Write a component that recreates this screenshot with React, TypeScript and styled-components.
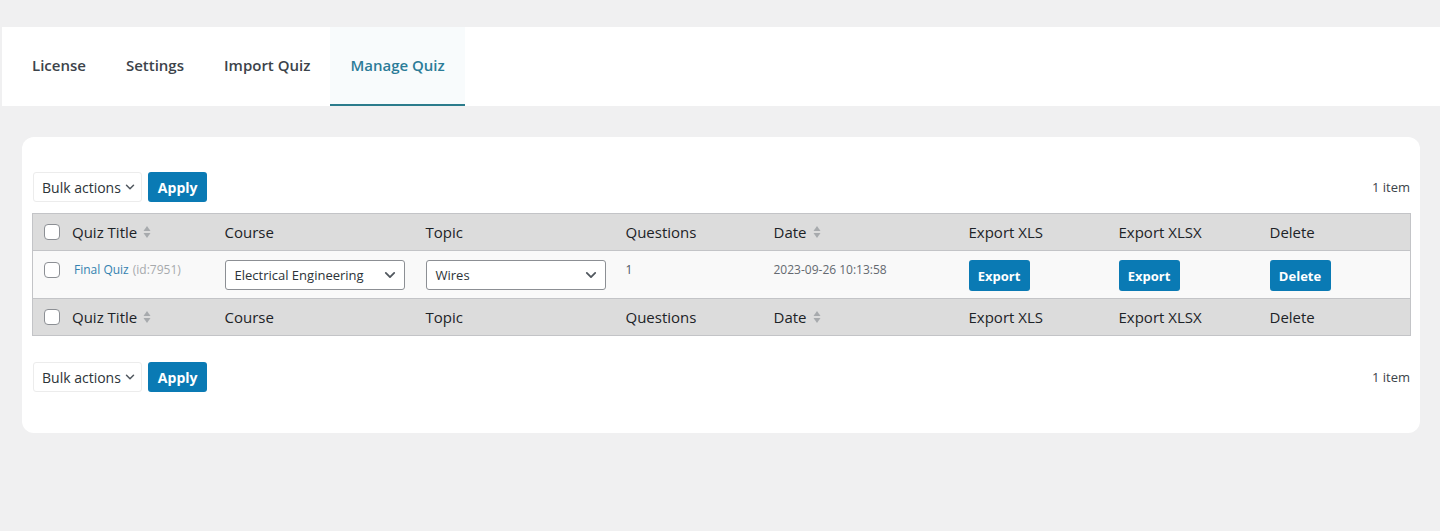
import styled, { createGlobalStyle } from 'styled-components'

const GlobalStyle = createGlobalStyle`
  html, body {
    margin: 0;
    padding: 0;
    background: #f0f0f1;
    font-family: 'Open Sans', 'Noto Sans', sans-serif;
    color: #1d2327;
  }
`

const Page = styled.div`
  width: 1440px;
  height: 531px;
  padding-top: 27px;
  box-sizing: border-box;
`

const TabBar = styled.nav`
  display: flex;
  margin-left: 2px;
  height: 79px;
  background: #fff;
  padding-left: 10px;
`

const Tab = styled.div<{ active?: boolean }>`
  display: flex;
  align-items: center;
  padding: 0 20px 2px;
  font-size: 15px;
  font-weight: 600;
  color: ${({ active }) => (active ? '#2b7c98' : '#3c434a')};
  background: ${({ active }) => (active ? '#f8fbfc' : 'transparent')};
  border-bottom: 2px solid ${({ active }) => (active ? '#2b7c8c' : 'transparent')};
`

const Card = styled.section`
  margin: 31px 20px 0 22px;
  background: #fff;
  border-radius: 12px;
  padding: 35px 10px 41px 10px;
`

const Toolbar = styled.div<{ bottom?: boolean }>`
  display: flex;
  align-items: center;
  gap: 6px;
  margin-bottom: ${({ bottom }) => (bottom ? '0' : '11px')};
  margin-top: ${({ bottom }) => (bottom ? '26px' : '0')};
`

const BulkSelect = styled.div`
  display: flex;
  align-items: center;
  gap: 4px;
  height: 30px;
  box-sizing: border-box;
  padding: 0 6px 0 8px;
  border: 1px solid #ececec;
  border-radius: 3px;
  font-size: 14px;
  color: #2c3338;
  margin-left: 1px;
`

const Button = styled.button`
  height: 30px;
  padding: 0 10px;
  border: none;
  border-radius: 3px;
  background: #0a7ab4;
  color: #fff;
  font-family: inherit;
  font-size: 14px;
  font-weight: 700;
`

const SmallButton = styled(Button)`
  height: 31px;
  width: 61px;
  padding: 0;
  font-size: 13px;
`

const Count = styled.span`
  margin-left: auto;
  font-size: 13px;
  color: #3c434a;
`

const Table = styled.table`
  width: 100%;
  border-collapse: collapse;
  border: 1px solid #c3c4c7;
  table-layout: fixed;
`

const HeadRow = styled.tr`
  background: #dcdcdc;
  height: 37px;
`

const Th = styled.th<{ w: number }>`
  width: ${({ w }) => w}px;
  box-sizing: border-box;
  text-align: left;
  font-weight: 400;
  font-size: 15px;
  padding: 0 10px;
  color: #1d2327;
  white-space: nowrap;
`

const BodyRow = styled.tr`
  background: #f9f9f9;
  height: 48px;
  border-top: 1px solid #c3c4c7;
  border-bottom: 1px solid #c3c4c7;
`

const Td = styled.td`
  padding: 9px 10px 0;
  vertical-align: top;
  font-size: 12px;
  line-height: 20px;
  color: #50575e;
  white-space: nowrap;
`

const TitleCell = styled.div<{ gap?: number }>`
  display: flex;
  align-items: center;
  gap: ${({ gap }) => gap ?? 12}px;
  padding-left: 1px;
`

const Check = styled.span`
  display: inline-block;
  width: 16px;
  height: 16px;
  box-sizing: border-box;
  border: 1px solid #8c8f94;
  border-radius: 4px;
  background: #fff;
  flex-shrink: 0;
`

const Sortable = styled.span`
  display: inline-flex;
  align-items: center;
  gap: 6px;
`

const QuizLink = styled.a`
  color: #3582b0;
  text-decoration: none;
  font-size: 12px;
`

const IdLabel = styled.span`
  color: #a7aaad;
  margin-left: 4px;
`

const Select = styled.div`
  display: flex;
  align-items: center;
  justify-content: space-between;
  width: 180px;
  height: 30px;
  box-sizing: border-box;
  padding: 0 8px 0 9px;
  border: 1px solid #8c8f94;
  border-radius: 3px;
  background: #fff;
  font-size: 13px;
  color: #2c3338;
`

const DateText = styled.span`
  color: #646970;
`

const Chevron = ({ size = 10 }: { size?: number }) => (
  <svg width={size} height={size} viewBox="0 0 10 10" fill="none">
    <path d="M1.5 3.2 L5 6.7 L8.5 3.2" stroke="#50575e" strokeWidth="1.5" strokeLinecap="round" strokeLinejoin="round" />
  </svg>
)

const SortIcon = () => (
  <svg width="8" height="14" viewBox="0 0 8 14">
    <path d="M4 1 L7.5 6 H0.5 Z" fill="#a7aaad" />
    <path d="M4 13 L7.5 8 H0.5 Z" fill="#a7aaad" />
  </svg>
)

const columns = [
  { key: 'title', label: 'Quiz Title', w: 182, sort: true },
  { key: 'course', label: 'Course', w: 201 },
  { key: 'topic', label: 'Topic', w: 200 },
  { key: 'questions', label: 'Questions', w: 148 },
  { key: 'date', label: 'Date', w: 195, sort: true },
  { key: 'xls', label: 'Export XLS', w: 150 },
  { key: 'xlsx', label: 'Export XLSX', w: 151 },
  { key: 'delete', label: 'Delete', w: 151 },
]

const HeaderRow = () => (
  <HeadRow>
    {columns.map((c, i) => (
      <Th key={c.key} w={c.w}>
        {i === 0 ? (
          <TitleCell>
            <Check />
            <Sortable>
              {c.label} <SortIcon />
            </Sortable>
          </TitleCell>
        ) : c.sort ? (
          <Sortable>
            {c.label} <SortIcon />
          </Sortable>
        ) : (
          c.label
        )}
      </Th>
    ))}
  </HeadRow>
)

const BulkBar = ({ bottom }: { bottom?: boolean }) => (
  <Toolbar bottom={bottom}>
    <BulkSelect>
      Bulk actions <Chevron />
    </BulkSelect>
    <Button>Apply</Button>
    <Count>1 item</Count>
  </Toolbar>
)

export default function App() {
  return (
    <Page>
      <GlobalStyle />
      <TabBar>
        <Tab>License</Tab>
        <Tab>Settings</Tab>
        <Tab>Import Quiz</Tab>
        <Tab active>Manage Quiz</Tab>
      </TabBar>
      <Card>
        <BulkBar />
        <Table>
          <thead>
            <HeaderRow />
          </thead>
          <tbody>
            <BodyRow>
              <Td>
                <TitleCell gap={14}>
                  <Check />
                  <span>
                    <QuizLink href="#">Final Quiz</QuizLink>
                    <IdLabel>(id:7951)</IdLabel>
                  </span>
                </TitleCell>
              </Td>
              <Td>
                <Select>
                  Electrical Engineering <Chevron size={12} />
                </Select>
              </Td>
              <Td>
                <Select>
                  Wires <Chevron size={12} />
                </Select>
              </Td>
              <Td>1</Td>
              <Td>
                <DateText>2023-09-26 10:13:58</DateText>
              </Td>
              <Td>
                <SmallButton>Export</SmallButton>
              </Td>
              <Td>
                <SmallButton>Export</SmallButton>
              </Td>
              <Td>
                <SmallButton>Delete</SmallButton>
              </Td>
            </BodyRow>
          </tbody>
          <tfoot>
            <HeaderRow />
          </tfoot>
        </Table>
        <BulkBar bottom />
      </Card>
    </Page>
  )
}
